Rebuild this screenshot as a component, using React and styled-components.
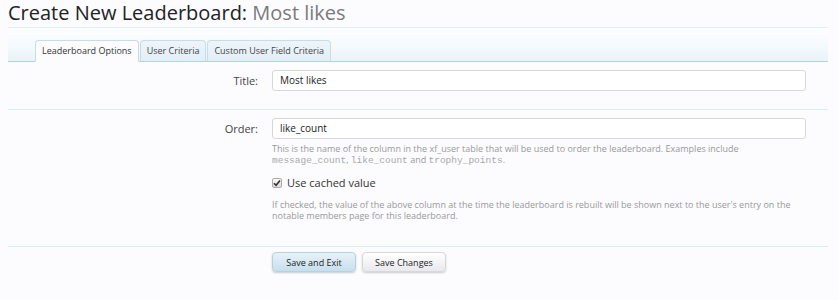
import React from 'react'
import styled, { createGlobalStyle } from 'styled-components'

const GlobalStyle = createGlobalStyle`
  html, body {
    margin: 0;
    padding: 0;
    background: #fcfcff;
  }
  body {
    font-family: "Open Sans", "DejaVu Sans", sans-serif;
    color: #333;
  }
`;

const Page = styled.div`
  width: 839px;
  height: 300px;
  padding: 0 11px 0 8px;
  box-sizing: border-box;
  overflow: hidden;
`;

const Heading = styled.h1`
  margin: 0;
  height: 28px;
  font-size: 20px;
  font-weight: normal;
  color: #222;
  line-height: 26px;
  border-bottom: 1px solid #e3eef1;
  box-sizing: border-box;
  span {
    color: #7a7a7a;
  }
`;

const TabBar = styled.div`
  display: flex;
  align-items: flex-end;
  height: 34px;
  padding-left: 27px;
  background: linear-gradient(180deg, #fdfeff 0%, #f6fafd 50%, #e9f3f8 100%);
  border-bottom: 1px solid #b3d3d8;
  box-sizing: border-box;
`;

const Tab = styled.div`
  height: 20px;
  line-height: 20px;
  padding: 0 6px;
  margin-right: 1px;
  font-size: 9px;
  color: ${p => (p.$active ? '#333' : '#444')};
  background: ${p => (p.$active ? '#fcfcff' : 'linear-gradient(180deg, #eef5fa 0%, #e2eef6 100%)')};
  border: 1px solid #c7dde6;
  border-bottom: ${p => (p.$active ? '1px solid #fcfcff' : 'none')};
  border-radius: 4px 4px 0 0;
  margin-bottom: ${p => (p.$active ? '-1px' : '0')};
  white-space: nowrap;
`;

const Row = styled.div`
  display: grid;
  grid-template-columns: 250px 534px;
  column-gap: 14px;
  padding: ${p => p.$pad || '8px 0 18px'};
  border-bottom: ${p => (p.$last ? 'none' : '1px solid #d9eef0')};
`;

const Label = styled.div`
  text-align: right;
  font-size: 11px;
  line-height: 21px;
  color: #444;
`;

const Controls = styled.div`
  display: flex;
  flex-direction: column;
`;

const Input = styled.div`
  height: 19px;
  line-height: 19px;
  padding: 0 7px;
  border: 1px solid #d8d8d8;
  border-radius: 3px;
  background: #fff;
  font-size: 10px;
  color: #222;
`;

const Hint = styled.p`
  margin: ${p => p.$margin || '4px 0 0'};
  font-size: 9px;
  line-height: 11px;
  color: #999;
`;

const Code = styled.code`
  display: inline-block;
  font-family: "Liberation Mono", "Courier New", monospace;
  font-size: 9.5px;
  line-height: 11px;
  color: #a8a8a8;
`;

const CheckLine = styled.label`
  display: flex;
  align-items: center;
  gap: 5px;
  margin-top: 9px;
  font-size: 11px;
  color: #333;
`;

const Box = styled.span`
  width: 10px;
  height: 10px;
  border: 1px solid #aaa;
  border-radius: 2px;
  background: linear-gradient(180deg, #fafafa, #dcdcdc);
  display: flex;
  align-items: center;
  justify-content: center;
  box-sizing: border-box;
`;

const Buttons = styled.div`
  display: flex;
  gap: 6px;
`;

const Button = styled.div`
  width: 84px;
  height: 20px;
  line-height: 20px;
  text-align: center;
  font-size: 9px;
  color: #222;
  border-radius: 4px;
  border: 1px solid ${p => (p.$primary ? '#b7d2df' : '#d8d8dc')};
  background: ${p =>
    p.$primary
      ? 'linear-gradient(180deg, #e8f2f8 0%, #c7dfec 100%)'
      : 'linear-gradient(180deg, #ffffff 0%, #e9e9ee 100%)'};
  box-shadow: 0 1px 2px rgba(0, 0, 0, 0.2);
  box-sizing: border-box;
`;

const App = () => (
  <>
    <GlobalStyle />
    <Page>
      <Heading>
        Create New Leaderboard: <span>Most likes</span>
      </Heading>
      <TabBar>
        <Tab $active>Leaderboard Options</Tab>
        <Tab>User Criteria</Tab>
        <Tab>Custom User Field Criteria</Tab>
      </TabBar>
      <Row>
        <Label>Title:</Label>
        <Controls>
          <Input>Most likes</Input>
        </Controls>
      </Row>
      <Row $pad="8px 0 25px">
        <Label>Order:</Label>
        <Controls>
          <Input>like_count</Input>
          <Hint>
            This is the name of the column in the xf_user table that will be used to order the leaderboard. Examples include{' '}
            <Code>message_count</Code>, <Code>like_count</Code> and <Code>trophy_points</Code>.
          </Hint>
          <CheckLine>
            <Box>
              <svg width="8" height="8" viewBox="0 0 8 8">
                <path d="M1 4.2 L3.1 6.3 L7 1.5" fill="none" stroke="#333" strokeWidth="1.6" />
              </svg>
            </Box>
            Use cached value
          </CheckLine>
          <Hint $margin="9px 0 0">
            If checked, the value of the above column at the time the leaderboard is rebuilt will be shown next to the user's entry on the notable members page for this leaderboard.
          </Hint>
        </Controls>
      </Row>
      <Row $last $pad="5px 0 0">
        <div />
        <Buttons>
          <Button $primary>Save and Exit</Button>
          <Button>Save Changes</Button>
        </Buttons>
      </Row>
    </Page>
  </>
)

export default App
